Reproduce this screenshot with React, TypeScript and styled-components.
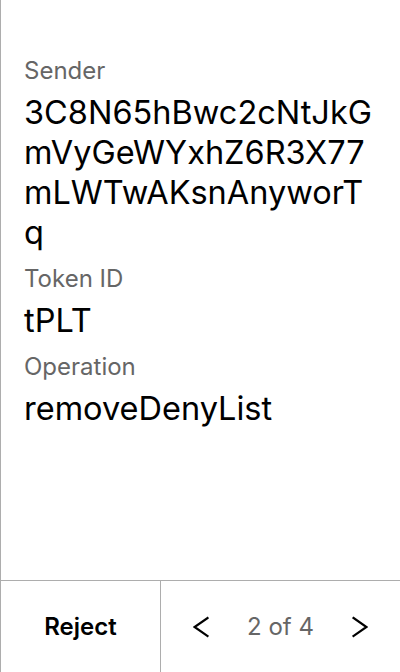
import React from "react";
import styled, { createGlobalStyle } from "styled-components";

const Global = createGlobalStyle`
  html, body { margin: 0; padding: 0; background: #fff; }
  body { font-family: Inter, "Noto Sans", sans-serif; }
  * { box-sizing: border-box; }
`;

const Frame = styled.div`
  width: 400px;
  height: 672px;
  display: flex;
  flex-direction: column;
  border-left: 1px solid #adadad;
  background: #fff;
`;

const Details = styled.div`
  flex: 1;
  display: flex;
  flex-direction: column;
  gap: 12px;
  padding: 57px 20px 0 23px;
`;

const Field = styled.div`
  display: flex;
  flex-direction: column;
  gap: 8px;
`;

const Label = styled.div`
  font-size: 24px;
  line-height: 28px;
  color: #666;
`;

const Value = styled.div`
  font-size: 32.5px;
  line-height: 40px;
  color: #000;
  word-break: break-all;
`;

const Footer = styled.div`
  height: 92px;
  display: flex;
  border-top: 1px solid #adadad;
`;

const RejectButton = styled.button`
  width: 160px;
  border: none;
  border-right: 1px solid #adadad;
  background: transparent;
  font-family: Inter, "Noto Sans", sans-serif;
  font-size: 24px;
  font-weight: 600;
  color: #000;
  padding: 0;
  cursor: pointer;
`;

const Pager = styled.div`
  flex: 1;
  display: flex;
  align-items: center;
  justify-content: space-between;
  padding: 0 32px 0 32px;
`;

const NavButton = styled.button`
  width: 16px;
  height: 22px;
  border: none;
  background: transparent;
  padding: 0;
  display: flex;
  align-items: center;
  justify-content: center;
  color: #000;
`;

const Count = styled.span`
  font-size: 24px;
  color: #666;
`;

const Chevron = ({ dir }: { dir: "left" | "right" }) => (
  <svg width="16" height="22" viewBox="0 0 16 22" fill="none">
    <path
      d={dir === "left" ? "M14.5 2 L1.5 11 L14.5 20" : "M1.5 2 L14.5 11 L1.5 20"}
      stroke="currentColor"
      strokeWidth="2.3"
      strokeLinecap="square"
      strokeLinejoin="miter"
    />
  </svg>
);

const fields = [
  { label: "Sender", value: "3C8N65hBwc2cNtJkGmVyGeWYxhZ6R3X77mLWTwAKsnAnyworTq" },
  { label: "Token ID", value: "tPLT" },
  { label: "Operation", value: "removeDenyList" },
];

export default function App() {
  return (
    <>
      <Global />
      <Frame>
        <Details>
          {fields.map((f) => (
            <Field key={f.label}>
              <Label>{f.label}</Label>
              <Value>{f.value}</Value>
            </Field>
          ))}
        </Details>
        <Footer>
          <RejectButton>Reject</RejectButton>
          <Pager>
            <NavButton aria-label="Previous">
              <Chevron dir="left" />
            </NavButton>
            <Count>2 of 4</Count>
            <NavButton aria-label="Next">
              <Chevron dir="right" />
            </NavButton>
          </Pager>
        </Footer>
      </Frame>
    </>
  );
}
